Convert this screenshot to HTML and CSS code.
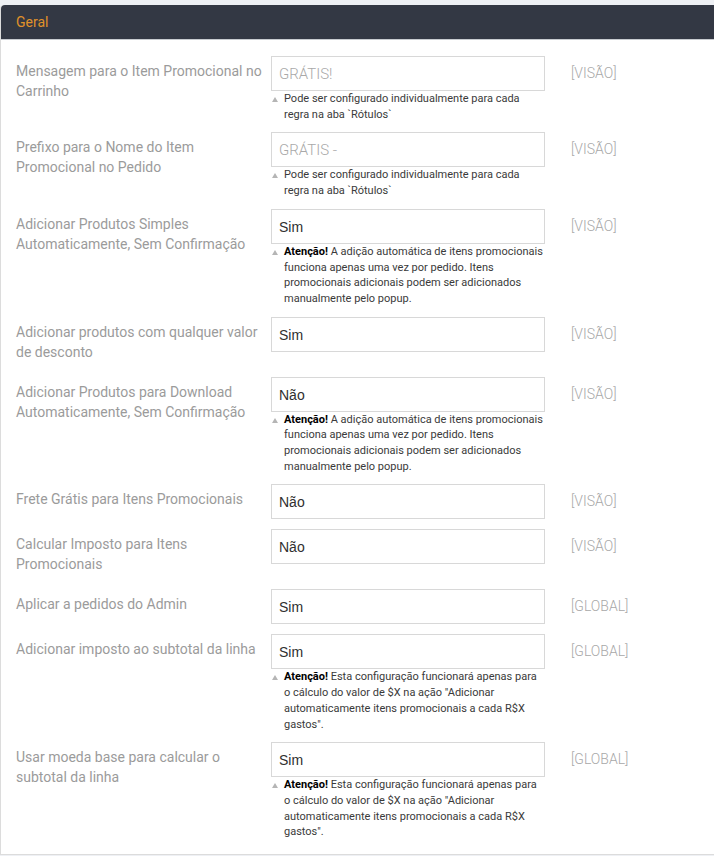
FILE: index.html
```html
<!DOCTYPE html>
<html lang="pt-BR">
<head>
<meta charset="utf-8">
<title>Geral</title>
<link rel="stylesheet" href="styles.css">
</head>
<body>
<div class="panel">
  <div class="panel-head">Geral</div>
  <div class="panel-body">
    <div class="row">
      <div class="label">Mensagem para o Item Promocional no Carrinho</div>
      <div class="value">
        <div class="input placeholder">GRÁTIS!</div>
        <div class="note">Pode ser configurado individualmente para cada regra na aba `Rótulos`</div>
      </div>
      <div class="scope">[VISÃO]</div>
    </div>
    <div class="row">
      <div class="label">Prefixo para o Nome do Item Promocional no Pedido</div>
      <div class="value">
        <div class="input placeholder">GRÁTIS -</div>
        <div class="note">Pode ser configurado individualmente para cada regra na aba `Rótulos`</div>
      </div>
      <div class="scope">[VISÃO]</div>
    </div>
    <div class="row">
      <div class="label">Adicionar Produtos Simples Automaticamente, Sem Confirmação</div>
      <div class="value">
        <div class="input">Sim</div>
        <div class="note"><b>Atenção!</b> A adição automática de itens promocionais funciona apenas uma vez por pedido. Itens promocionais adicionais podem ser adicionados manualmente pelo popup.</div>
      </div>
      <div class="scope">[VISÃO]</div>
    </div>
    <div class="row">
      <div class="label">Adicionar produtos com qualquer valor de desconto</div>
      <div class="value">
        <div class="input">Sim</div>
      </div>
      <div class="scope">[VISÃO]</div>
    </div>
    <div class="row">
      <div class="label">Adicionar Produtos para Download Automaticamente, Sem Confirmação</div>
      <div class="value">
        <div class="input">Não</div>
        <div class="note"><b>Atenção!</b> A adição automática de itens promocionais funciona apenas uma vez por pedido. Itens promocionais adicionais podem ser adicionados manualmente pelo popup.</div>
      </div>
      <div class="scope">[VISÃO]</div>
    </div>
    <div class="row">
      <div class="label">Frete Grátis para Itens Promocionais</div>
      <div class="value">
        <div class="input">Não</div>
      </div>
      <div class="scope">[VISÃO]</div>
    </div>
    <div class="row">
      <div class="label">Calcular Imposto para Itens Promocionais</div>
      <div class="value">
        <div class="input">Não</div>
      </div>
      <div class="scope">[VISÃO]</div>
    </div>
    <div class="row">
      <div class="label">Aplicar a pedidos do Admin</div>
      <div class="value">
        <div class="input">Sim</div>
      </div>
      <div class="scope">[GLOBAL]</div>
    </div>
    <div class="row">
      <div class="label">Adicionar imposto ao subtotal da linha</div>
      <div class="value">
        <div class="input">Sim</div>
        <div class="note"><b>Atenção!</b> Esta configuração funcionará apenas para o cálculo do valor de $X na ação "Adicionar automaticamente itens promocionais a cada R$X gastos".</div>
      </div>
      <div class="scope">[GLOBAL]</div>
    </div>
    <div class="row">
      <div class="label">Usar moeda base para calcular o subtotal da linha</div>
      <div class="value">
        <div class="input">Sim</div>
        <div class="note"><b>Atenção!</b> Esta configuração funcionará apenas para o cálculo do valor de $X na ação "Adicionar automaticamente itens promocionais a cada R$X gastos".</div>
      </div>
      <div class="scope">[GLOBAL]</div>
    </div>
  </div>
</div>
</body>
</html>
```
FILE: styles.css
```css
html, body {
  margin: 0;
  padding: 0;
  background: #eef0f4;
  overflow: hidden;
}
body {
  padding-top: 5px;
  font-family: Roboto, "Liberation Sans", Arial, sans-serif;
}
.panel {
  width: 760px;
  background: #fff;
  border: 1px solid #dcdcdc;
  border-top: 0;
  border-radius: 4px 4px 0 0;
}
.panel-head {
  height: 35px;
  box-sizing: border-box;
  background: #333844;
  color: #e0922a;
  font-size: 14px;
  line-height: 35px;
  padding-left: 15px;
  border-bottom: 1px solid #c8cbd0;
  border-radius: 4px 4px 0 0;
}
.panel-body {
  padding: 16px 0 4px 15px;
}
.row {
  display: grid;
  grid-template-columns: 255px 274px auto;
  padding-bottom: 10px;
  align-items: start;
}
.label {
  color: #9b9b9b;
  font-size: 14px;
  line-height: 20px;
  padding: 5px 0;
  width: 252px;
}
.input {
  height: 35px;
  box-sizing: border-box;
  border: 1px solid #d8d8d8;
  padding: 0 7px;
  font-family: "Liberation Sans", Arial, sans-serif;
  font-size: 14px;
  line-height: 34px;
  color: #303030;
}
.input.placeholder {
  font-family: Roboto, sans-serif;
  font-weight: 300;
  font-size: 15px;
  color: #a9a9a9;
}
.note {
  position: relative;
  padding-left: 13px;
  font-size: 11px;
  line-height: 15.7px;
  color: #3a3a3a;
}
.note b {
  color: #000;
  font-weight: 700;
}
.note::before {
  content: "";
  position: absolute;
  left: 1px;
  top: 6px;
  width: 0;
  height: 0;
  border-left: 3px solid transparent;
  border-right: 3px solid transparent;
  border-bottom: 5px solid #b5b5b5;
}
.scope {
  margin-left: 26px;
  color: #a8a8a8;
  font-weight: 300;
  font-size: 14px;
  line-height: 20px;
  padding-top: 7px;
}
```
